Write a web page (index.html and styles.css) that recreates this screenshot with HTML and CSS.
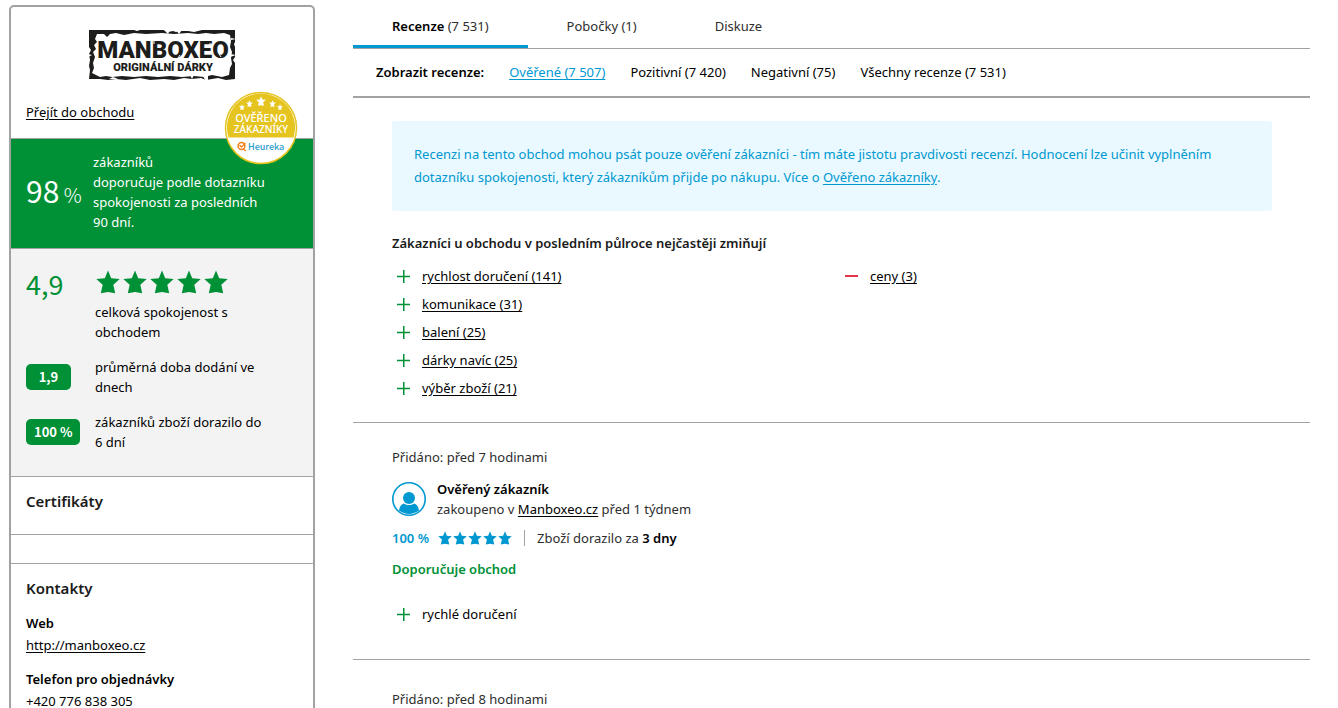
FILE: index.html
```html
<!DOCTYPE html>
<html lang="cs">
<head>
<meta charset="utf-8">
<title>Manboxeo – recenze obchodu</title>
<link rel="stylesheet" href="styles.css">
</head>
<body>
<svg class="symbols" aria-hidden="true">
  <symbol id="star" viewBox="0 0 24 24"><path d="M12 0.6l3.200 7.700 8.500.8-6.400 5.600 1.900 8.500L12 22l-7.200 1.200 1.900-8.500L.3 9.100l8.500-.8z"/></symbol>
  <symbol id="plus" viewBox="0 0 13 13"><path d="M6 0h1.500v13H6zM0 5.800h13v1.500H0z"/></symbol>
  <symbol id="minus" viewBox="0 0 13 13"><path d="M0 5h13v2H0z"/></symbol>
</svg>
<div class="page">
  <aside class="shop">
    <header class="shop-head">
      <svg class="logo" viewBox="0 0 148 50" role="img" aria-label="Manboxeo originální dárky">
        <path fill="#1d1d1b" fill-rule="evenodd" d="M1 0H46L49 1 52 0H76L80 2 85 1 88 2 92 1H100L106 2 114 0H147V12L146 14 147 17V27L145 30 147 33V49L138 50 130 48 118 50 113 48 104 49 96 48 86 50 76 49 62 50 52 48 38 50 28 49 20 50 12 49H1L2 40 1 36 2 30 1 24 3 20 1 17zM9 4 7 9 9 12 6 15 8 19 5 22 7 27 5 33 6 38 4 43 8 45 12 47 18 46 24 47 34 46 46 47 58 46 70 47 82 46 94 47 106 46 116 47 124 45 134 47 141 45 142 38 144 34 143 28 144 22 142 17 143 11 142 5 136 3 126 4 118 3 110 4 100 3 86 4 74 3 58 4 46 3 36 5 28 3 22 4 19 7 16 4z"/>
        <path fill="#fff" d="M76 0h6l-2 4zM88 0h6l-3 4zM115 46l5 0 0 4h-3zM102 45l4 0-2 4zM21 49l9 0-5-2zM142 24l6 1-6 2zM0 24l4 1-4 2zM143 8l5 1-5 1z"/>
        <text class="logo-name" x="75" y="28" text-anchor="middle">MANBOXEO</text>
        <text class="logo-claim" x="75" y="41" text-anchor="middle">ORIGINÁLNÍ DÁRKY</text>
        <path fill="none" stroke="#fff" stroke-width="1" d="M36 11l-3 5M66 10v4M94 10l2 3M92 25l-2 3M131 24l2 3M121 14h3"/>
      </svg>
      <a href="#">Přejít do obchodu</a>
      <svg class="badge" viewBox="0 0 74 74" role="img" aria-label="Ověřeno zákazníky Heureka">
        <circle cx="37" cy="37" r="35.500" fill="#fff" stroke="#e6c420" stroke-width="1.500"/>
        <path fill="#e6c420" d="M4.500 46.500A34 34 0 1 1 69.500 46.500z"/>
        <g fill="#fff">
          <use href="#star" x="32" y="5" width="10" height="10"/>
          <use href="#star" x="22" y="9" width="7" height="7"/>
          <use href="#star" x="45" y="9" width="7" height="7"/>
          <use href="#star" x="15" y="13" width="6" height="6"/>
          <use href="#star" x="53" y="13" width="6" height="6"/>
        </g>
        <text class="badge-text" x="37" y="31" text-anchor="middle">OVĚŘENO</text>
        <text class="badge-text small" x="37" y="42" text-anchor="middle">ZÁKAZNÍKY</text>
        <circle cx="17.500" cy="55" r="3.400" fill="none" stroke="#f58220" stroke-width="1.500"/>
        <path fill="none" stroke="#f58220" stroke-width="1.300" d="M15.500 54l2 2 4-4M19 58l3 2"/>
        <text class="badge-brand" x="24" y="59">Heureka</text>
      </svg>
    </header>
    <section class="recommend">
      <p class="score">98<span> %</span></p>
      <p>zákazníků<br>doporučuje podle dotazníku spokojenosti za posledních 90&nbsp;dní.</p>
    </section>
    <section class="stats">
      <div class="stat overall">
        <strong class="rating">4,9</strong>
        <div>
          <div class="big-stars"><svg><use href="#star"/></svg><svg><use href="#star"/></svg><svg><use href="#star"/></svg><svg><use href="#star"/></svg><svg><use href="#star"/></svg></div>
          <p>celková spokojenost s obchodem</p>
        </div>
      </div>
      <div class="stat"><div><b class="tag">1,9</b></div><p>průměrná doba dodání ve dnech</p></div>
      <div class="stat"><div><b class="tag">100 %</b></div><p>zákazníků zboží dorazilo do 6&nbsp;dní</p></div>
    </section>
    <section class="panel certificates"><h2>Certifikáty</h2></section>
    <section class="panel blank"></section>
    <section class="panel">
      <h2>Kontakty</h2>
      <dl>
        <dt>Web</dt><dd><a href="#">http://manboxeo.cz</a></dd>
        <dt>Telefon pro objednávky</dt><dd><a href="#">+420 776 838 305</a></dd>
      </dl>
    </section>
  </aside>
  <main class="content">
    <nav class="tabs">
      <a class="active" href="#"><b>Recenze</b> (7 531)</a>
      <a href="#">Pobočky (1)</a>
      <a href="#">Diskuze</a>
    </nav>
    <nav class="filters">
      <b>Zobrazit recenze:</b>
      <a class="active" href="#">Ověřené (7 507)</a>
      <a href="#">Pozitivní (7 420)</a>
      <a href="#">Negativní (75)</a>
      <a href="#">Všechny recenze (7 531)</a>
    </nav>
    <section class="summary">
      <p class="notice">Recenzi na tento obchod mohou psát pouze ověření zákazníci - tím máte jistotu pravdivosti recenzí. Hodnocení lze učinit vyplněním dotazníku spokojenosti, který zákazníkům přijde po nákupu. Více o <a href="#">Ověřeno zákazníky</a>.</p>
      <h3>Zákazníci u obchodu v posledním půlroce nejčastěji zmiňují</h3>
      <div class="mentions">
        <ul class="points">
          <li><svg class="pro"><use href="#plus"/></svg><a href="#">rychlost doručení (141)</a></li>
          <li><svg class="pro"><use href="#plus"/></svg><a href="#">komunikace (31)</a></li>
          <li><svg class="pro"><use href="#plus"/></svg><a href="#">balení (25)</a></li>
          <li><svg class="pro"><use href="#plus"/></svg><a href="#">dárky navíc (25)</a></li>
          <li><svg class="pro"><use href="#plus"/></svg><a href="#">výběr zboží (21)</a></li>
        </ul>
        <ul class="points">
          <li><svg class="con"><use href="#minus"/></svg><a href="#">ceny (3)</a></li>
        </ul>
      </div>
    </section>
    <article class="review">
      <p class="added">Přidáno: před 7 hodinami</p>
      <div class="author">
        <svg viewBox="0 0 34 34" class="avatar" aria-hidden="true">
          <circle cx="17" cy="17" r="16.200" fill="none" stroke="#0098d0" stroke-width="1.600"/>
          <circle cx="17" cy="16" r="6" fill="#0098d0"/>
          <path fill="#0098d0" d="M7 28.500c.5-4 2.500-6.500 5-7 3 2 7 2 10 0 2.500.5 4.500 3 5 7-6 4.500-14 4.500-20 0z"/>
        </svg>
        <div><b>Ověřený zákazník</b><p>zakoupeno v <a href="#">Manboxeo.cz</a> před 1 týdnem</p></div>
      </div>
      <div class="result">
        <span class="percent">100 %</span>
        <span class="small-stars"><svg><use href="#star"/></svg><svg><use href="#star"/></svg><svg><use href="#star"/></svg><svg><use href="#star"/></svg><svg><use href="#star"/></svg></span>
        <span class="delivery">Zboží dorazilo za <b>3 dny</b></span>
      </div>
      <p class="verdict">Doporučuje obchod</p>
      <ul class="points"><li><svg class="pro"><use href="#plus"/></svg>rychlé doručení</li></ul>
    </article>
    <article class="review"><p class="added">Přidáno: před 8 hodinami</p></article>
  </main>
</div>
</body>
</html>
```

FILE: styles.css
```css
* { box-sizing: border-box; }
html { overflow: hidden; }
body {
  margin: 0;
  height: 100vh;
  overflow: hidden;
  background: #fff;
  color: #000;
  font: 13px/20px "Noto Sans", "Open Sans", sans-serif;
}
p, h2, h3, ul, dl, dd { margin: 0; padding: 0; }
ul { list-style: none; }
a { color: #000; text-underline-offset: 2px; }
b, strong, dt, h3 { font-weight: 600; }
.symbols { position: absolute; width: 0; height: 0; }

.page { display: flex; gap: 38px; padding: 0 28px 0 9px; }

.shop {
  flex: 0 0 306px;
  margin-top: 5px;
  border: 2px solid #a2a2a2;
  border-radius: 5px;
}
.shop-head {
  position: relative;
  display: flex;
  flex-direction: column;
  align-items: flex-start;
  gap: 22px;
  padding: 23px 15px 16px;
  border-bottom: 1px solid #a2a2a2;
}
.logo { width: 148px; height: 50px; align-self: center; }
.logo-name { font: 900 24px Roboto, sans-serif; fill: #1d1d1b; }
.logo-claim { font: 900 11px Roboto, sans-serif; fill: #1d1d1b; }
.badge { position: absolute; right: 15px; bottom: -27px; width: 74px; height: 74px; }
.badge-text { font: 500 11px "Noto Sans", "Open Sans", sans-serif; fill: #fff; }
.badge-text.small { font-size: 10px; }
.badge-brand { font: 500 9px "Noto Sans CJK SC", sans-serif; fill: #2c9ecf; }

.recommend {
  display: grid;
  grid-template-columns: 67px 1fr;
  align-items: center;
  padding: 13px 36px 16px 15px;
  border-bottom: 1px solid #a2a2a2;
  background: #009036;
  color: #fff;
}
.score { font: 30px/32px "Noto Sans CJK SC", sans-serif; white-space: nowrap; }
.score span { font-size: 20px; font-weight: 300; }

.stats {
  display: grid;
  gap: 15px;
  padding: 21px 30px 24px 15px;
  border-bottom: 1px solid #a2a2a2;
  background: #f3f3f3;
}
.stat { display: grid; grid-template-columns: 69px 1fr; align-items: center; }
.overall { align-items: start; }
.rating { color: #009036; font: 27px/28px "Noto Sans CJK SC", sans-serif; }
.big-stars { display: flex; gap: 3px; margin-bottom: 8px; padding-left: 1px; fill: #009036; }
.big-stars svg { width: 24px; height: 24px; }
.tag {
  display: block;
  width: fit-content;
  min-width: 45px;
  padding: 3px 8px;
  border-radius: 5px;
  background: #009036;
  color: #fff;
  font-family: "Noto Sans CJK SC", sans-serif;
  font-weight: 700;
  text-align: center;
}

.panel { padding: 13px 15px; }
.certificates { padding-bottom: 22px; }
.blank { padding-bottom: 15px; }
.certificates, .blank { border-bottom: 1px solid #a2a2a2; }
h2 { font-size: 15px; line-height: 22px; font-weight: 600; color: #1a1a1a; }
dl { margin-top: 13px; }
dt { line-height: 22px; }
dd { line-height: 22px; margin-bottom: 12px; }

.content { flex: 1; min-width: 0; color: #2d2d2d; }
.content b { color: #000; }
.tabs { display: flex; border-bottom: 1px solid #a2a2a2; }
.tabs a { padding: 16px 39px 12px; color: #2d2d2d; text-decoration: none; }
.tabs .active { padding-bottom: 9px; border-bottom: 3px solid #0098d0; }
.filters { display: flex; gap: 25px; padding: 13px 23px 14px; border-bottom: 2px solid #a2a2a2; }
.filters a { text-decoration: none; }
.filters .active { color: #0098d0; text-decoration: underline; }

.summary { padding: 23px 38px 20px 39px; border-bottom: 1px solid #a2a2a2; }
.notice { padding: 22px; border-radius: 3px; background: #e9f9ff; color: #0098d0; line-height: 23px; }
.notice a { color: inherit; }
h3 { margin: 22px 0 9px; font-size: 13px; line-height: 20px; color: #1a1a1a; }
.mentions { display: grid; grid-template-columns: 1fr 1fr; gap: 16px; }
.points { color: #000; line-height: 28px; }
.points li { display: flex; align-items: center; gap: 12px; padding-left: 5px; }
.points svg { width: 13px; height: 13px; }
.pro { fill: #009036; }
.con { fill: #e3344c; }

.review { padding: 24px 38px 31px 39px; border-bottom: 1px solid #a2a2a2; }
.review + .review { padding-top: 29px; }
.author { display: flex; align-items: center; gap: 11px; margin-top: 12px; }
.avatar { width: 34px; height: 34px; }
.result { display: flex; align-items: center; margin-top: 9px; }
.percent { color: #0098d0; font-weight: 600; }
.small-stars { display: flex; gap: 1px; margin: 0 12px 0 9px; fill: #0098d0; }
.small-stars svg { width: 14px; height: 14px; }
.delivery { padding-left: 12px; border-left: 1px solid #a2a2a2; line-height: 16px; }
.verdict { margin: 11px 0 21px; color: #009036; font-weight: 600; }
```
